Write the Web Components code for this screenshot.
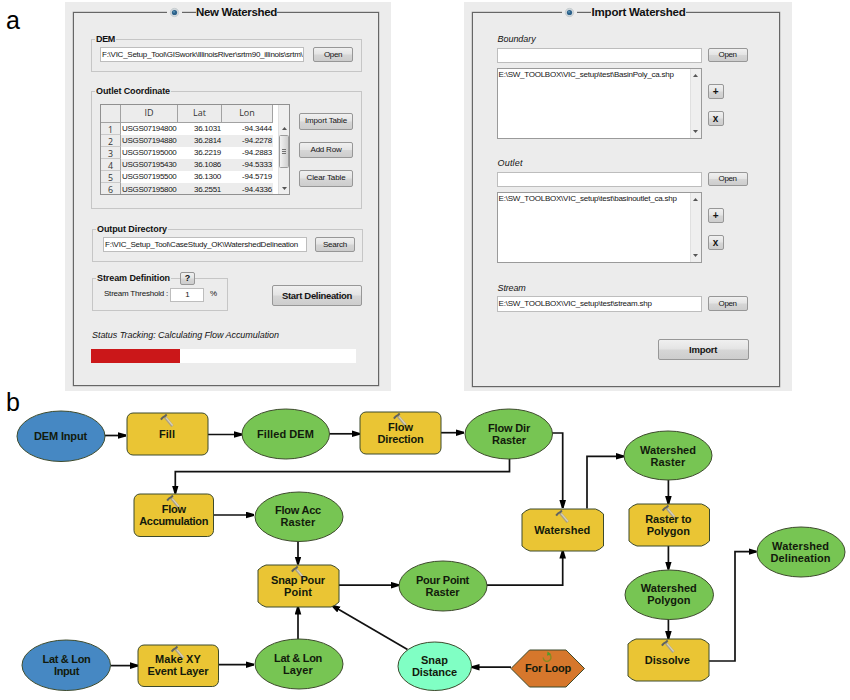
<!DOCTYPE html>
<html lang="en">
<head>
<meta charset="utf-8">
<title>Watershed toolbox</title>
<style>
html,body{margin:0;padding:0}
body{width:850px;height:700px;overflow:hidden;background:#fff;color:#141414;font:8px/12px "Liberation Sans",Arial,sans-serif}
</style>
</head>
<body>
<figure-page>
  <fig-letter slot="a">a</fig-letter>
  <tool-panel slot="left" style="--w:325.5px;--h:389px;--fh:374px;--fw:306px;--fx:8px" lead="93">
    <fit-text slot="title" w="81">New Watershed</fit-text>
    <group-box style="--w:271px;--h:33px;margin:19px 0 0 17px">
      <fit-text slot="legend" w="19">DEM</fit-text>
      <h-row style="padding:2px 0 0 8px;gap:9px">
        <text-field style="--w:204px;--h:15px"><fit-text w="200.5">F:\VIC_Setup_Tool\GISwork\IllinoisRiver\srtm90_illinois\srtm\</fit-text></text-field>
        <push-button style="--w:40px;--h:15px"><fit-text w="18">Open</fit-text></push-button>
      </h-row>
    </group-box>
    <group-box style="--w:271px;--h:118px;margin:19px 0 0 17px">
      <fit-text slot="legend" w="74">Outlet Coordinate</fit-text>
      <h-row style="padding:7px 0 0 8px;gap:9px">
        <coord-table></coord-table>
        <v-stack style="padding-top:9px;gap:12px">
          <push-button style="--w:54px;--h:16.5px"><fit-text w="42">Import Table</fit-text></push-button>
          <push-button style="--w:54px;--h:16.5px"><fit-text w="31">Add Row</fit-text></push-button>
          <push-button style="--w:54px;--h:16.5px"><fit-text w="39">Clear Table</fit-text></push-button>
        </v-stack>
      </h-row>
    </group-box>
    <group-box style="--w:271px;--h:33px;margin:20px 0 0 18px">
      <fit-text slot="legend" w="70">Output Directory</fit-text>
      <h-row style="padding:2px 0 0 10px;gap:8px">
        <text-field style="--w:204px;--h:15px"><fit-text w="193">F:\VIC_Setup_Tool\CaseStudy_OK\WatershedDelineation</fit-text></text-field>
        <push-button style="--w:40px;--h:15px"><fit-text w="24">Search</fit-text></push-button>
      </h-row>
    </group-box>
    <h-row style="margin:16px 0 0 18px;gap:44px">
      <group-box style="--w:136px;--h:33px">
        <fit-text slot="legend" w="73">Stream Definition</fit-text>
        <push-button slot="extra" style="--w:15px;--h:13px;font:bold 9px/12px 'Liberation Sans',Arial,sans-serif">?</push-button>
        <h-row style="padding:4px 0 0 11px;gap:2px">
          <fit-text w="64">Stream Threshold :</fit-text>
          <text-field style="--w:34px;--h:14px;--j:center">1</text-field>
          <fit-text w="7" style="margin-left:4px">%</fit-text>
        </h-row>
      </group-box>
      <push-button style="--w:90px;--h:21px;margin-top:7px;font:bold 9.5px/12px 'Liberation Sans',Arial,sans-serif"><fit-text w="70">Start Delineation</fit-text></push-button>
    </h-row>
    <field-caption style="margin:18px 0 0 18px"><fit-text w="187">Status Tracking: Calculating Flow Accumulation</fit-text></field-caption>
    <progress-strip></progress-strip>
  </tool-panel>
  <tool-panel slot="right" style="--w:328px;--h:389px;--fh:375px;--fw:308px;--fx:8px" lead="89">
    <fit-text slot="title" w="94" style="padding-left:1px">Import Watershed</fit-text>
    <field-caption style="margin:13px 0 0 25px"><fit-text w="38">Boundary</fit-text></field-caption>
    <file-picker style="margin:3px 0 0 24px">
      <fit-text slot="item" w="175">E:\SW_TOOLBOX\VIC_setup\test\BasinPoly_ca.shp</fit-text>
    </file-picker>
    <field-caption style="margin:18px 0 0 25px"><fit-text w="25">Outlet</fit-text></field-caption>
    <file-picker style="margin:3px 0 0 24px">
      <fit-text slot="item" w="178">E:\SW_TOOLBOX\VIC_setup\test\basinoutlet_ca.shp</fit-text>
    </file-picker>
    <field-caption style="margin:19px 0 0 25px"><fit-text w="28">Stream</fit-text></field-caption>
    <h-row style="margin:2px 0 0 24px;gap:6px">
      <text-field style="--w:205px;--h:16px"><fit-text w="153">E:\SW_TOOLBOX\VIC_setup\test\stream.shp</fit-text></text-field>
      <push-button style="--w:40px;--h:15px"><fit-text w="18">Open</fit-text></push-button>
    </h-row>
    <push-button style="--w:91px;--h:21px;margin:27px 0 0 185px;font:bold 9.5px/12px 'Liberation Sans',Arial,sans-serif"><fit-text w="28">Import</fit-text></push-button>
  </tool-panel>
  <fig-letter slot="b">b</fig-letter>
  <model-canvas slot="model"></model-canvas>
</figure-page>

<script>
const define = (name, html, init) => {
  const tpl = document.createElement('template');
  tpl.innerHTML = html;
  customElements.define(name, class extends HTMLElement {
    connectedCallback() {
      if (this.shadowRoot) return;
      this.attachShadow({ mode: 'open' }).append(tpl.content.cloneNode(true));
      if (init) init(this, this.shadowRoot);
    }
  });
};

define('figure-page', `<style>
:host{display:grid;grid-template-rows:392px 308px;width:850px;height:700px}
.top{display:grid;grid-template-columns:65px 398.6px 1fr;padding-top:2px}
.bottom{display:grid;position:relative}
</style>
<div class="top"><slot name="a"></slot><slot name="left"></slot><slot name="right"></slot></div>
<div class="bottom"><slot name="b"></slot><slot name="model"></slot></div>`);

define('fig-letter', `<style>
:host{display:block;font-size:25px;line-height:28px;padding:4px 0 0 6px;color:#000;height:28px}
:host([slot=b]){padding:0;margin:-4px 0 0 6px}
</style><slot></slot>`);

define('h-row', `<style>:host{display:flex;align-items:flex-start}</style><slot></slot>`);
define('v-stack', `<style>:host{display:flex;flex-direction:column}</style><slot></slot>`);

define('tool-panel', `<style>
:host{display:block;box-sizing:border-box;width:var(--w);height:var(--h);background:#ececec;padding:10px 0 0 var(--fx)}
.frame{box-sizing:border-box;width:var(--fw);height:var(--fh);border:1px solid #666;box-shadow:0 0 0 .4px #aaa}
.title{display:flex;align-items:center;height:16px;margin-top:-9px;font:bold 11.5px/16px "Liberation Sans",Arial,sans-serif;color:#111}
.dot{width:15px;height:14px;background:#ececec;display:flex;align-items:center;justify-content:center}
.dot svg{display:block}
.name{background:#ececec;margin-left:14px}
</style>
<div class="frame"><div class="title"><span class="dot"><svg width="11" height="11" viewBox="0 0 11 11"><circle cx="5.5" cy="5.5" r="4.2" fill="#d0d7db" stroke="#c3c9cc" stroke-width=".8"/><circle cx="5.5" cy="5.5" r="2.6" fill="#2c618a"/><circle cx="5" cy="4.9" r=".8" fill="#65a4c7"/></svg></span><span class="name"><slot name="title"></slot></span></div><slot></slot></div>`,
(el, root) => { root.querySelector('.dot').style.marginLeft = el.getAttribute('lead') + 'px'; });

define('group-box', `<style>
:host{display:block;flex:none;box-sizing:border-box;width:var(--w);height:var(--h);border:1px solid #c6c6c6}
.legend{display:flex;align-items:center;height:12px;margin-top:-7px;padding-left:3px;font:bold 9px/12px "Liberation Sans",Arial,sans-serif;color:#111}
.text{background:#ececec;padding:0 1px}
::slotted([slot=extra]){margin-left:9px}
</style>
<div class="legend"><span class="text"><slot name="legend"></slot></span><slot name="extra"></slot></div><slot></slot>`);

define('text-field', `<style>
:host{display:flex;flex:none;align-items:center;justify-content:var(--j,flex-start);box-sizing:border-box;width:var(--w);height:var(--h);border:1px solid #bdbdbd;background:#fff;overflow:hidden;padding-left:1px}
</style><slot></slot>`);

define('push-button', `<style>
:host{display:flex;flex:none;align-items:center;justify-content:center;box-sizing:border-box;width:var(--w);height:var(--h);border:1px solid #979797;border-radius:2px;background:linear-gradient(#f0f0f0,#e4e4e4 48%,#d6d6d6 52%,#cdcdcd)}
</style><slot></slot>`);

define('field-caption', `<style>
:host{display:flex;height:12px;font:italic 9px/12px "Liberation Sans",Arial,sans-serif}
</style><slot></slot>`);

define('progress-strip', `<style>
:host{display:block;width:265px;height:14px;margin:8px 0 0 17px;background:#fff}
i{display:block;width:89px;height:14px;background:#cb1719}
</style><i></i>`);

define('scroll-bar', `<style>
:host{display:flex;flex-direction:column;justify-content:space-between;align-items:center;box-sizing:border-box;width:11px;background:#efefef;border-left:1px solid #e0e0e0;padding:5px 0}
svg{display:block}
.thumb{display:none;box-sizing:border-box;width:10px;height:33px;border:1px solid #9c9c9c;border-radius:1.5px;background:linear-gradient(90deg,#f2f2f2,#cfcfcf);align-items:center;justify-content:center;margin-bottom:14px}
:host([thumb]){padding:22px 0 4px}
:host([thumb]) .thumb{display:flex}
</style>
<svg width="5" height="3"><path d="M0 3L2.5 0L5 3z" fill="#555"/></svg>
<span class="thumb"><svg width="4" height="6"><path d="M0 .5h4M0 2.5h4M0 4.5h4" stroke="#666" stroke-width=".9"/></svg></span>
<svg width="5" height="3"><path d="M0 0L2.5 3L5 0z" fill="#555"/></svg>`);

define('file-picker', `<style>
:host{display:grid;grid-template-columns:205px 40px;column-gap:6px;row-gap:5px}
.list{box-sizing:border-box;height:71px;border:1px solid #9a9a9a;background:#fff;display:flex;justify-content:space-between;padding-left:1px}
.keys{display:grid;gap:12px;align-content:start;padding-top:16px;font:bold 10px/12px "Liberation Sans",Arial,sans-serif}
</style>
<text-field style="--w:205px;--h:15px"></text-field>
<push-button style="--w:40px;--h:14px"><fit-text w="18">Open</fit-text></push-button>
<div class="list"><slot name="item"></slot><scroll-bar></scroll-bar></div>
<div class="keys"><push-button style="--w:16px;--h:15px">+</push-button><push-button style="--w:16px;--h:15px">x</push-button></div>`);

const stations = [
  ['USGS07194800', '36.1031', '-94.3444'], ['USGS07194880', '36.2814', '-94.2278'],
  ['USGS07195000', '36.2219', '-94.2883'], ['USGS07195430', '36.1086', '-94.5333'],
  ['USGS07195500', '36.1300', '-94.5719'], ['USGS07195800', '36.2551', '-94.4336']
];
define('coord-table', `<style>
:host{display:flex;justify-content:space-between;box-sizing:border-box;width:190px;height:91px;border:1px solid #909090;background:#fff;overflow:hidden}
.grid{display:grid;grid-template-columns:20px 57px 44px 51px;grid-template-rows:18px repeat(6,12.1px);line-height:12px}
.grid>*{box-sizing:border-box;display:flex;align-items:center;white-space:nowrap}
.h,.n{background:#ececec;border-right:1px solid #a2a2a2;border-bottom:1px solid #a2a2a2;justify-content:center;font-family:"Open Sans","Noto Sans",sans-serif;color:#333;font-size:9px}
.h{padding-bottom:1px}
.n{border-bottom-color:#c9c9c9;padding-top:2px;font-size:8.8px}
.id{padding-left:1px}
.v{justify-content:flex-end;padding-right:1px}
.odd{background:#ececec}
</style><div class="grid"></div><scroll-bar thumb></scroll-bar>`,
(el, root) => {
  let html = '<span class="h"></span><span class="h">ID</span><span class="h">Lat</span><span class="h">Lon</span>';
  stations.forEach(([id, lat, lon], i) => {
    const c = i % 2 ? ' odd' : '';
    html += `<span class="n">${i + 1}</span><span class="id${c}"><fit-text w="54.5">${id}</fit-text></span><span class="v${c}"><fit-text w="27">${lat}</fit-text></span><span class="v${c}"><fit-text w="30">${lon}</fit-text></span>`;
  });
  root.querySelector('.grid').innerHTML = html;
});

/* Node: kind, left, top, right, bottom, label centre x, centre y of first line, [text, width] lines */
const nodes = [
  ['input', 16.5, 410.5, 104.5, 461, 60.5, 436, ['DEM Input', 53]],
  ['round', 126.5, 413, 207.5, 455, 167, 434, ['Fill', 16]],
  ['data', 242, 408.5, 329.5, 458.5, 285.5, 433.5, ['Filled DEM', 57]],
  ['round', 360, 411.5, 441, 453.5, 400.5, 427, ['Flow', 25], ['Direction', 46]],
  ['data', 464.5, 408.5, 552, 458.5, 509, 427.5, ['Flow Dir', 42], ['Raster', 34]],
  ['round', 134, 493.5, 213.5, 536, 173.7, 508.5, ['Flow', 24], ['Accumulation', 69]],
  ['data', 254.5, 491.5, 342.5, 541, 298, 510, ['Flow Acc', 46], ['Raster', 35]],
  ['cut', 257.5, 564.5, 338.5, 606.5, 298, 579.5, ['Snap Pour', 54], ['Point', 28]],
  ['data', 399, 560.5, 487, 610.5, 442.5, 579.5, ['Pour Point', 53], ['Raster', 34]],
  ['cut', 522, 508.5, 603.5, 550.5, 562.3, 529.5, ['Watershed', 56]],
  ['data', 624, 431, 712, 480, 668, 449.5, ['Watershed', 56], ['Raster', 35]],
  ['cut', 628.5, 504, 709, 546, 668.3, 519, ['Raster to', 46], ['Polygon', 43]],
  ['data', 624.5, 569.5, 713, 619, 668.8, 588, ['Watershed', 56], ['Polygon', 43]],
  ['cut', 627.5, 639, 708.5, 681, 667.3, 660, ['Dissolve', 45]],
  ['data', 756.5, 527, 844.5, 577, 800.6, 546, ['Watershed', 57], ['Delineation', 60]],
  ['input', 22, 640, 110.5, 690.5, 66.5, 659, ['Lat & Lon', 48], ['Input', 25]],
  ['round', 138, 644.5, 218.5, 686, 178, 659, ['Make XY', 46], ['Event Layer', 61]],
  ['data', 254.5, 639, 342.5, 689, 298, 658, ['Lat & Lon', 48], ['Layer', 30]],
  ['param', 398, 641.5, 471.5, 690, 434.5, 660, ['Snap', 27], ['Distance', 45]],
  ['loop', 511, 649.5, 584.5, 686.5, 548, 668, ['For Loop', 46]]
];
const links = [
  'M104.5 435.5H126', 'M207.5 434.5H242', 'M329.5 433.8H360', 'M441 432.7H464',
  'M552 433H562.7V508', 'M509.5 458.5V471.7H175.3V493.5', 'M213.5 515H254', 'M298 541V564.5',
  'M338.5 585.2H399', 'M487 585.2H562.7V550.5', 'M587 508.5V456.3H624', 'M668.4 480V504',
  'M668.4 546V569.5', 'M668.4 619V639', 'M708.5 661H735V551.7H756.5', 'M407.5 649.5L332 605.5',
  'M511 667.2H471.5', 'M298 639V606.5', 'M218.5 664.7H254', 'M110.5 665.6H138'
];
const OY = 392;

define('model-canvas', `<style>
:host{display:block;position:absolute;inset:0}
svg{position:absolute;left:0;top:0}
</style>
<svg width="850" height="308" viewBox="0 ${OY} 850 308"><defs><marker id="tip" markerUnits="userSpaceOnUse" markerWidth="9" markerHeight="8" refX="8" refY="3.5" orient="auto"><path d="M0 .2L8 2.6V4.4L0 6.8z" fill="#000"/></marker></defs>
<g fill="none" stroke="#111" stroke-width="1.7">${links.map(d => `<path d="${d}" marker-end="url(#tip)"/>`).join('')}</g></svg>`,
(el, root) => {
  for (const n of nodes) {
    const node = document.createElement('model-node');
    node.data = n;
    root.append(node);
  }
});

define('model-node', `<style>
:host{position:absolute;display:block}
svg{display:block;overflow:visible}
.label{position:absolute;display:flex;flex-direction:column;align-items:center;width:0;font:bold 11px/12px "Liberation Sans",Arial,sans-serif;color:#121a0c}
</style>`,
(el, root) => {
  const [kind, l, t, r, b, cx, cy, ...lines] = el.data;
  const w = r - l, h = b - t, mid = w / 2;
  el.style.left = l + 'px';
  el.style.top = t - OY + 'px';
  const fill = { input: '#4688c3', data: '#77c553', param: '#80ffc4', round: '#eac534', cut: '#eac534', loop: '#d6772c' }[kind];
  const paint = `fill="${fill}" stroke="#3d4a2c" stroke-width="1"`;
  let shape;
  if (kind === 'round') shape = `<rect width="${w}" height="${h}" rx="6" ${paint}/>`;
  else if (kind === 'cut') shape = `<path d="M8 0H${w - 8}Q${w - 4} 1 ${w} 5V${h - 5}Q${w - 4} ${h - 1} ${w - 8} ${h}H8Q4 ${h - 1} 0 ${h - 5}V5Q4 1 8 0z" ${paint}/>`;
  else if (kind === 'loop') shape = `<path d="M0 ${h / 2}L18.5 0H55L${w} ${h / 2}L55 ${h}H18.5z" ${paint}/><path d="M32.2 7.5A3.9 3.9 0 1 0 38.5 4.4" fill="none" stroke="#8a8a20" stroke-width="1.4"/><path d="M36 5.8L36.6 1.6L40.2 4.2z" fill="#4f9a2c"/>`;
  else shape = `<ellipse cx="${mid}" cy="${h / 2}" rx="${mid}" ry="${h / 2}" ${paint}/>`;
  const tool = kind === 'round' || kind === 'cut'
    ? `<g transform="translate(${mid - 3} 3.6)" fill="none"><path d="M.5 .5L8 9.5" stroke="#a89f86" stroke-width="2.8"/><path d="M1.5 1L8.2 8.9" stroke="#d6d0b8" stroke-width="1.3"/><path d="M-3.6 3Q-2 .6 .4 -.4L2.2 -2" stroke="#5e6262" stroke-width="2"/></g>` : '';
  root.innerHTML += `<svg width="${w}" height="${h}">${shape}${tool}</svg>
<div class="label" style="left:${cx - l}px;top:${cy - t - 6}px">${lines.map(([s, lw]) => `<fit-text w="${lw}">${s.replace('&', '&amp;')}</fit-text>`).join('')}</div>`;
});

/* Sets letter spacing so that the text takes up the width given in "w". */
define('fit-text', `<style>:host{display:block;flex:none;white-space:nowrap}span{display:inline-block}</style><span><slot></slot></span>`,
(el, root) => {
  const span = root.querySelector('span');
  const gap = (el.getAttribute('w') - span.getBoundingClientRect().width) / el.textContent.length;
  span.style.letterSpacing = gap.toFixed(3) + 'px';
});
</script>
</body>
</html>
